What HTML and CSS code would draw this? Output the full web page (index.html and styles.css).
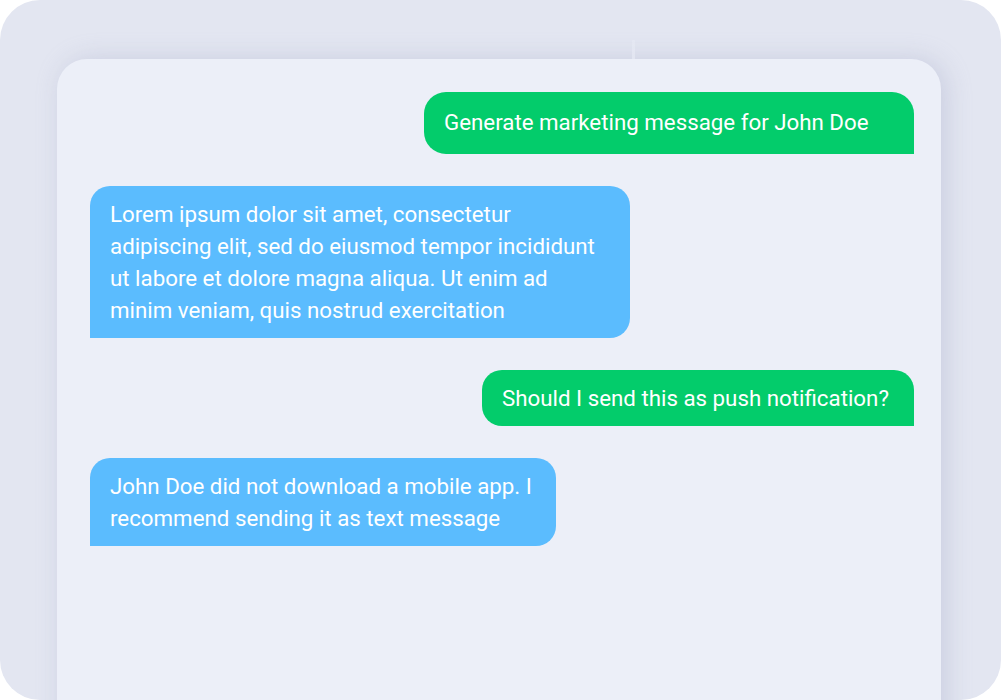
FILE: index.html
```html
<!DOCTYPE html>
<html>
<head>
<meta charset="utf-8">
<link rel="stylesheet" href="styles.css">
</head>
<body>
<div class="frame">
  <div class="card">
    <div class="bubble out first">Generate marketing message for John Doe</div>
    <div class="bubble in wide">Lorem ipsum dolor sit amet, consectetur<br>adipiscing elit, sed do eiusmod tempor incididunt<br>ut labore et dolore magna aliqua. Ut enim ad<br>minim veniam, quis nostrud exercitation</div>
    <div class="bubble out second">Should I send this as push notification?</div>
    <div class="bubble in narrow">John Doe did not download a mobile app. I<br>recommend sending it as text message</div>
  </div>
  <div class="divider"></div>
</div>
</body>
</html>
```
FILE: styles.css
```css
* { box-sizing: border-box; }
html, body { margin: 0; padding: 0; background: #ffffff; }
body { font-family: Roboto, "Liberation Sans", sans-serif; }
.frame {
  position: relative;
  width: 1001px;
  height: 700px;
  border-radius: 40px;
  background: #e3e6f1;
  overflow: hidden;
  padding: 59px 0 0 57px;
}
.card {
  width: 884px;
  height: 700px;
  border-radius: 30px 30px 0 0;
  background: #eceff8;
  box-shadow: 5px 0 26px rgba(150, 156, 190, 0.32);
  padding: 33px 27px 0 33px;
  display: flex;
  flex-direction: column;
  gap: 32px;
}
.bubble {
  color: #ffffff;
  font-size: 22.3px;
  line-height: 32px;
  padding: 12px 20px;
  white-space: nowrap;
}
.out {
  align-self: flex-end;
  background: #03cc6b;
  border-radius: 20px 20px 0 20px;
}
.in {
  align-self: flex-start;
  background: #5bbcfe;
  border-radius: 20px 20px 20px 0;
}
.first { width: 490px; height: 62px; padding-top: 14px; border-radius: 22px 22px 0 22px; }
.second { width: 432px; }
.wide { width: 540px; }
.narrow { width: 466px; }
.divider {
  position: absolute;
  left: 632px;
  top: 40px;
  width: 3px;
  height: 46px;
  background: linear-gradient(to bottom, rgba(236, 239, 248, 0.3), rgba(236, 239, 248, 0.9));
}
```
